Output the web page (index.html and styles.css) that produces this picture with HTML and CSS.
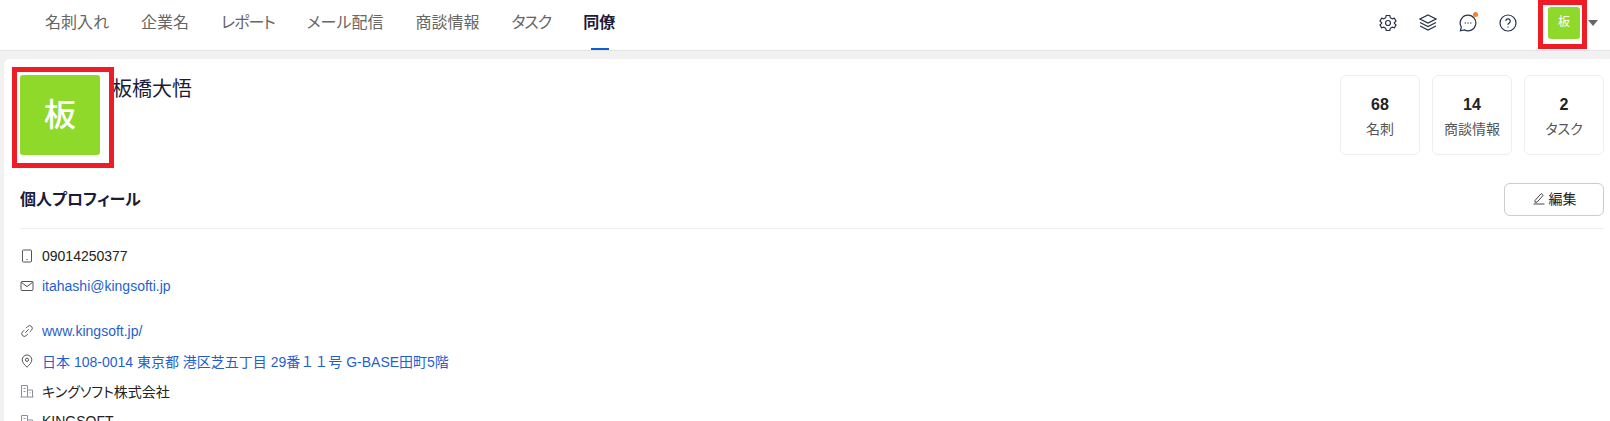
FILE: index.html
```html
<!DOCTYPE html>
<html lang="ja">
<head>
    <meta charset="UTF-8">
    <meta name="viewport" content="width=device-width,initial-scale=1">
    <title>同僚</title>
    <link rel="stylesheet" href="styles.css">
</head>
<body>
    <div class="header">
        <div class="nav">
            <a class="nav-item">名刺入れ</a>
            <a class="nav-item">企業名</a>
            <a class="nav-item tight">レポート</a>
            <a class="nav-item">メール配信</a>
            <a class="nav-item">商談情報</a>
            <a class="nav-item tight">タスク</a>
            <a class="nav-item active">同僚</a>
        </div>
        <div class="header-tools">
            <svg class="tool" viewBox="0 0 18 18">
                <path d="M7.2 1.5h3.6l.5 2.2 1.9 1.1 2.2-.7 1.6 3-1.6 1.4v1l1.6 1.4-1.6 3-2.2-.7-1.9 1.1-.5 2.2H7.2l-.5-2.2-1.9-1.1-2.2.7-1.6-3L2.6 9.5v-1L1 7.1l1.6-3 2.2.7 1.9-1.1z"/>
                <circle cx="9" cy="9" r="2.5"/>
            </svg>
            <svg class="tool" viewBox="0 0 18 18">
                <path d="M9 1 17 5 9 9 1 5z"/>
                <path d="M1 8.5 9 12.5 17 8.5"/>
                <path d="M1 12 9 16 17 12"/>
            </svg>
            <span class="tool-wrap">
                <svg class="tool" viewBox="0 0 18 18">
                    <path d="M9 1.2a7.8 7.8 0 1 1-3.6 14.7L1.4 16.8l.9-3.8A7.8 7.8 0 0 1 9 1.2z"/>
                    <path class="dots" d="M5.8 9h.9M8.6 9h.9M11.4 9h.9"/>
                </svg>
                <span class="dot"></span>
            </span>
            <svg class="tool" viewBox="0 0 18 18">
                <circle cx="9" cy="9" r="8"/>
                <path d="M6.8 7a2.2 2.2 0 1 1 3.4 1.9c-.8.5-1.2 1-1.2 1.9"/>
                <path d="M9 12.6v1"/>
            </svg>
        </div>
        <div class="user">
            <div class="avatar-small marked small-mark">板</div>
            <span class="caret"></span>
        </div>
    </div>

    <div class="card">
        <div class="profile-top">
            <div class="avatar marked big-mark">板</div>
            <h1 class="name">板橋大悟</h1>
            <div class="stats">
                <div class="stat-card">
                    <div class="value">68</div>
                    <div class="label">名刺</div>
                </div>
                <div class="stat-card">
                    <div class="value">14</div>
                    <div class="label">商談情報</div>
                </div>
                <div class="stat-card">
                    <div class="value">2</div>
                    <div class="label">タスク</div>
                </div>
            </div>
        </div>

        <div class="section-head">
            <h2>個人プロフィール</h2>
            <button class="edit-btn">
                <svg class="edit-icon" viewBox="0 0 14 14">
                    <path d="M3 9.5 9.2 2.6l2 1.800L5 11.200H3z"/>
                    <path d="M1.500 13h11"/>
                </svg>
                編集
            </button>
        </div>

        <div class="info-group">
            <div class="info-row">
                <svg class="info-icon" viewBox="0 0 14 14">
                    <rect x="2.500" y="1" width="9" height="12" rx="1"/>
                    <path d="M6.400 10.600h1.200"/>
                </svg>
                <span>09014250377</span>
            </div>
            <div class="info-row">
                <svg class="info-icon" viewBox="0 0 14 14">
                    <rect x="1" y="2.500" width="12" height="9" rx="1"/>
                    <path d="M1.200 3.200 7 7.600l5.800-4.400"/>
                </svg>
                <a class="link">itahashi@kingsofti.jp</a>
            </div>
        </div>

        <div class="info-group">
            <div class="info-row">
                <svg class="info-icon" viewBox="0 0 14 14">
                    <path d="M6 4.200 7.800 2.400a2.600 2.600 0 0 1 3.700 3.700L9.700 7.900"/>
                    <path d="M8 9.800 6.200 11.600a2.600 2.600 0 0 1-3.700-3.700L4.300 6.100"/>
                    <path d="M5.200 8.800l3.500-3.500"/>
                </svg>
                <a class="link">www.kingsoft.jp/</a>
            </div>
            <div class="info-row">
                <svg class="info-icon" viewBox="0 0 14 14">
                    <path d="M7 13.200C4.400 10.800 2.200 8.400 2.200 5.800a4.800 4.800 0 0 1 9.600 0c0 2.600-2.200 5-4.800 7.400z"/>
                    <circle cx="7" cy="5.800" r="1.600"/>
                </svg>
                <a class="link address">日本 108-0014 東京都 港区芝五丁目 29番１１号 G-BASE田町5階</a>
            </div>
            <div class="info-row">
                <svg class="info-icon building" viewBox="0 0 14 14">
                    <path d="M1.500 13V1.500h6V13M7.500 6h5V13M.5 13h13"/>
                    <path d="M3.500 4.500h2M3.500 7.500h2M9.500 8.800h1"/>
                </svg>
                <span>キングソフト株式会社</span>
            </div>
            <div class="info-row">
                <svg class="info-icon building" viewBox="0 0 14 14">
                    <path d="M1.500 13V1.500h6V13M7.500 6h5V13M.5 13h13"/>
                    <path d="M3.500 4.500h2M3.500 7.500h2M9.500 8.800h1"/>
                </svg>
                <span>KINGSOFT</span>
            </div>
        </div>
    </div>
</body>
</html>
```

FILE: styles.css
```css
* {
    margin: 0;
    padding: 0;
    box-sizing: border-box;
}

html,
body {
    height: 100%;
    overflow: hidden;
}

body {
    font-family: "Liberation Sans", "Noto Sans CJK JP", sans-serif;
    font-feature-settings: "palt";
    font-size: 14px;
    color: #222;
    background-color: #f1f1f1;
}

/* top bar */
.header {
    display: flex;
    align-items: center;
    height: 51px;
    padding-left: 45px;
    background-color: #fff;
    border-bottom: 1px solid #e4e4e4;
}

.nav {
    display: flex;
    gap: 32px;
    height: 50px;
}

.nav-item {
    position: relative;
    font-size: 16px;
    line-height: 45px;
    color: #666;
}

.nav-item.tight {
    letter-spacing: -1px;
}

.nav-item.active {
    font-weight: bold;
    color: #1b1b3a;
}

.nav-item.active::after {
    content: "";
    position: absolute;
    left: 8px;
    bottom: 0;
    width: 18px;
    height: 2px;
    background-color: #0f5fd0;
}

.header-tools {
    display: flex;
    align-items: center;
    gap: 22px;
    margin-left: auto;
    margin-right: 31px;
    margin-bottom: 4px;
}

.tool {
    display: block;
    width: 18px;
    height: 18px;
    fill: none;
    stroke: #26324a;
    stroke-width: 1.2;
}

.tool .dots {
    stroke-width: 1.4;
}

.tool-wrap {
    position: relative;
    display: block;
}

.dot {
    position: absolute;
    top: -2px;
    right: -1px;
    width: 5px;
    height: 5px;
    border-radius: 50%;
    background-color: #f5822a;
}

.user {
    display: flex;
    align-items: center;
    gap: 8px;
    margin-right: 12px;
    margin-bottom: 4px;
}

.avatar-small {
    width: 32px;
    height: 32px;
    line-height: 31px;
    text-align: center;
    font-size: 12px;
    color: #fff;
    background-color: #8fd92b;
    border-radius: 3px;
}

.caret {
    width: 0;
    height: 0;
    border-left: 5px solid transparent;
    border-right: 5px solid transparent;
    border-top: 6px solid #666;
}

/* red annotation frames */
.marked {
    position: relative;
}

.marked::after {
    content: "";
    position: absolute;
    border: 5px solid #ee1c25;
}

.small-mark::after {
    top: -7px;
    left: -10px;
    right: -7px;
    bottom: -10px;
}

.big-mark::after {
    top: -8px;
    left: -8px;
    right: -14px;
    bottom: -13px;
}

/* profile card */
.card {
    margin: 8px 0 0 4px;
    padding: 16px 6px 0 16px;
    background-color: #fff;
    border-radius: 6px 0 0 0;
    height: 400px;
}

.profile-top {
    display: flex;
    align-items: flex-start;
}

.avatar {
    width: 80px;
    height: 80px;
    line-height: 80px;
    text-align: center;
    font-size: 32px;
    font-weight: 500;
    color: #fff;
    background-color: #8fd92b;
    border-radius: 3px;
}

.name {
    margin-left: 12px;
    font-size: 20px;
    font-feature-settings: normal;
    font-weight: normal;
    line-height: 28px;
    color: #1b1b3a;
}

.stats {
    display: flex;
    gap: 12px;
    margin-left: auto;
}

.stat-card {
    width: 80px;
    height: 80px;
    padding-top: 17px;
    text-align: center;
    border: 1px solid #eee;
    border-radius: 6px;
}

.stat-card .value {
    font-size: 16px;
    font-weight: bold;
    line-height: 24px;
    color: #222;
}

.stat-card .label {
    font-size: 14px;
    line-height: 24px;
    color: #555;
}

.section-head {
    display: flex;
    align-items: center;
    justify-content: space-between;
    margin-top: 28px;
    padding-bottom: 12px;
    border-bottom: 1px solid #eee;
}

.section-head h2 {
    margin-bottom: 4px;
    font-size: 16px;
    font-weight: bold;
    color: #1b1b3a;
}

.edit-btn {
    display: flex;
    align-items: center;
    justify-content: center;
    gap: 3px;
    width: 100px;
    height: 33px;
    padding-bottom: 3px;
    font-family: inherit;
    font-feature-settings: inherit;
    font-size: 14px;
    color: #222;
    background-color: #fff;
    border: 1px solid #ccc;
    border-radius: 6px;
}

.edit-icon {
    width: 14px;
    height: 14px;
    fill: none;
    stroke: #444;
    stroke-width: 1;
}

.info-group {
    margin-top: 12px;
}

.info-group + .info-group {
    margin-top: 15px;
}

.info-row {
    display: flex;
    align-items: center;
    gap: 8px;
    height: 30px;
}

.info-icon {
    width: 14px;
    height: 14px;
    flex-shrink: 0;
    fill: none;
    stroke: #555;
    stroke-width: 1;
}

.info-icon.building {
    stroke: #8a8f99;
}

.link {
    color: #1f5fd0;
}

.address {
    font-feature-settings: normal;
}
```
